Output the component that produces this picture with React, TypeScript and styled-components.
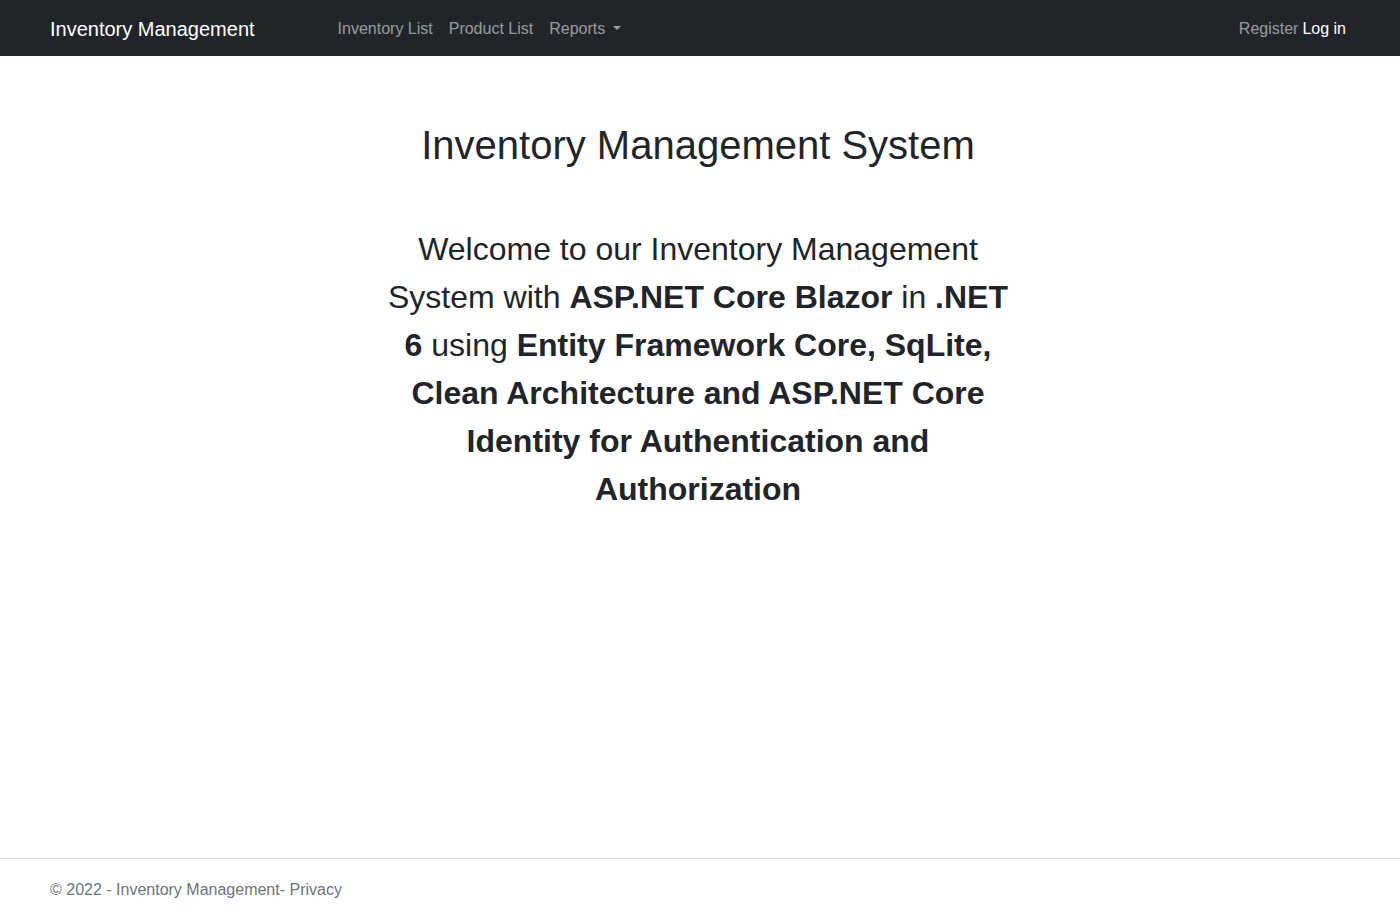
import React from "react";
import styled, { createGlobalStyle } from "styled-components";

const Global = createGlobalStyle`
  html, body { margin: 0; padding: 0; }
  body {
    font-family: "Liberation Sans", Arial, sans-serif;
    font-size: 16px;
    line-height: 1.5;
    color: #212529;
    background: #fff;
  }
  * { box-sizing: border-box; }
`;

const Page = styled.div`
  min-height: 918px;
  display: flex;
  flex-direction: column;
`;

const NavBar = styled.nav`
  height: 56px;
  background: #212529;
  display: flex;
  align-items: center;
  padding: 1px 46px 0 50px;
`;

const Brand = styled.a`
  font-size: 20px;
  color: #fff;
  text-decoration: none;
  margin-right: 75px;
  line-height: 30px;
`;

const NavList = styled.div`
  display: flex;
  align-items: center;
  flex: 1;
`;

const NavLink = styled.a<{ $active?: boolean; $tight?: "left" | "right" }>`
  color: ${(p) => (p.$active ? "#fff" : "rgba(255,255,255,0.55)")};
  text-decoration: none;
  padding: 8px;
  ${(p) => (p.$tight === "left" ? "padding-left: 0;" : "")}
  ${(p) => (p.$tight === "right" ? "padding-right: 4px;" : "")}
  font-size: 16px;
  display: inline-flex;
  align-items: center;
`;

const Caret = styled.span`
  display: inline-block;
  margin-left: 8px;
  width: 0;
  height: 0;
  border-top: 4.8px solid rgba(255,255,255,0.55);
  border-left: 4px solid transparent;
  border-right: 4px solid transparent;
  position: relative;
  top: -1px;
`;

const RightNav = styled.div`
  display: flex;
  align-items: center;
`;

const Main = styled.main`
  flex: 1;
  display: flex;
  flex-direction: column;
  align-items: center;
  padding: 65px 4px 0 0;
`;

const Title = styled.h1`
  font-size: 40px;
  font-weight: 400;
  line-height: 48px;
  margin: 0 0 56px;
  text-align: center;
`;

const Lead = styled.p`
  font-size: 32px;
  line-height: 48px;
  text-align: center;
  max-width: 640px;
  margin: 0;
  font-weight: 400;
  b { font-weight: 700; }
`;

const Footer = styled.footer`
  border-top: 1px solid #dee2e6;
  height: 60px;
  line-height: 60px;
  padding: 1px 50px 0;
  color: #6c757d;
  font-size: 16px;
`;

const FooterLink = styled.a`
  color: #6c757d;
  text-decoration: none;
`;

export default function App() {
  return (
    <Page>
      <Global />
      <NavBar>
        <Brand href="#">Inventory Management</Brand>
        <NavList>
          <NavLink href="#">Inventory List</NavLink>
          <NavLink href="#">Product List</NavLink>
          <NavLink href="#">
            Reports<Caret />
          </NavLink>
        </NavList>
        <RightNav>
          <NavLink href="#" $tight="right">Register</NavLink>
          <NavLink href="#" $active $tight="left">Log in</NavLink>
        </RightNav>
      </NavBar>
      <Main>
        <Title>Inventory Management System</Title>
        <Lead>
          Welcome to our Inventory Management System with <b>ASP.NET Core Blazor</b> in{" "}
          <b>.NET 6</b> using{" "}
          <b>
            Entity Framework Core, SqLite, Clean Architecture and ASP.NET Core Identity for
            Authentication and Authorization
          </b>
        </Lead>
      </Main>
      <Footer>
        © 2022 - Inventory Management- <FooterLink href="#">Privacy</FooterLink>
      </Footer>
    </Page>
  );
}
